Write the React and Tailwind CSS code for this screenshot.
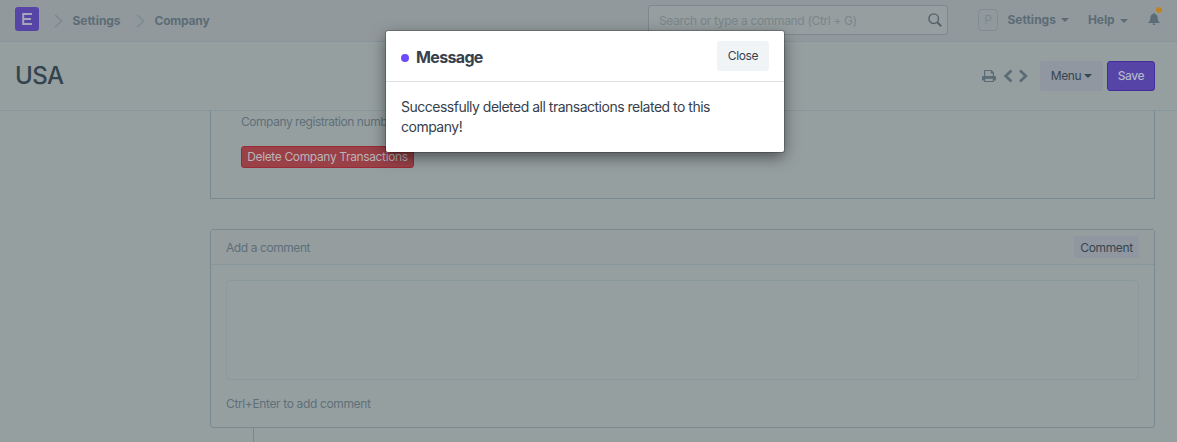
import React from "react";

function Chevron() {
  return (
    <svg width="9" height="14" viewBox="0 0 9 14" fill="none" stroke="#7b8b91" strokeWidth="1.5">
      <path d="M1 .8 7.600 7 1 13.200" />
    </svg>
  );
}

function Caret({ className }) {
  return (
    <svg className={className} width="8" height="4" viewBox="0 0 8 4" fill="currentColor">
      <path d="M0 0h8L4 4z" />
    </svg>
  );
}

function Navbar() {
  return (
    <header className="flex h-[42px] shrink-0 items-start border-b border-[#87969a] bg-[#92999c] text-[12px] font-bold text-[#5b6c76]">
      <div className="ml-[15px] mt-[7px] flex h-6 w-6 items-center justify-center rounded-[3px] bg-[#5645a6]">
        <svg width="10" height="12" viewBox="0 0 10 12" fill="none" stroke="#a5a6bc" strokeWidth="2">
          <path d="M10 1H1.200v10H10M1.200 6H9" />
        </svg>
      </div>
      <nav className="mt-[11px] flex h-[19px] items-center tracking-[-0.05px]">
        <span className="ml-[15px] mr-[9.500px]"><Chevron /></span>
        <span className="w-[49px] whitespace-nowrap">Settings</span>
        <span className="ml-[14px] mr-[10px]"><Chevron /></span>
        <span className="tracking-[-0.2px]">Company</span>
      </nav>
      <div className="ml-auto mt-[5px] flex h-[30px] w-[300px] items-center justify-between rounded-[3px] border border-[#7b8990] bg-[#969e9f] pl-[10px] pr-[5px] font-normal text-[#79868c]">
        <span className="pt-px tracking-[-0.33px]">Search or type a command (Ctrl + G)</span>
        <svg width="14" height="14" viewBox="0 0 14 14" fill="none" stroke="#52636b" strokeWidth="1.4">
          <circle cx="5.7" cy="5.7" r="4.8" />
          <path d="m9.2 9.2 4 4" strokeWidth="2" />
        </svg>
      </div>
      <div className="ml-[30px] mt-[9px] flex h-[22px] w-5 items-center justify-center rounded-[4px] border border-[#808d91] font-normal text-[#7b898f]">P</div>
      <div className="ml-[9.500px] mt-[10px] flex h-[19px] w-[61.500px] items-center justify-between">
        Settings<Caret />
      </div>
      <div className="ml-[19px] mt-[10px] flex h-[19px] w-[40px] items-center justify-between tracking-[-0.1px]">
        Help<Caret className="mt-[2px]" />
      </div>
      <div className="relative ml-[20px] mr-[17px] mt-[13px] h-3 w-3">
        <svg width="12" height="12" viewBox="0 0 12 12" fill="#5b6c76">
          <path d="M6 0c.6 0 .9.4.9.9C8.800 1.400 9.700 3 9.700 5c0 2.500.7 3.400 1.900 4.300v.8H.4v-.8C1.600 8.400 2.300 7.500 2.300 5c0-2 .9-3.600 2.800-4.100C5.100.4 5.400 0 6 0zM4.500 10.500h3a1.500 1.500 0 0 1-3 0z" />
        </svg>
        <span className="absolute -top-[6px] left-[8px] h-[6px] w-[6px] rounded-full bg-[#bb8424]" />
      </div>
    </header>
  );
}

function PageHead() {
  return (
    <div className="flex h-[69px] shrink-0 items-center border-b border-[#87969a] pl-[15px] pr-[22px]">
      <h1 className="text-[24px] font-[450] leading-none tracking-[-0.6px] text-[#33444f]">USA</h1>
      <div className="ml-auto flex items-center text-[12px]">
        <svg width="14" height="14" viewBox="0 0 14 14" fill="#5b6c76" className="mr-[7px]">
          <path fillRule="evenodd" d="M2 2Q2 1 3 1H9.500L12 3.500V7h.5A1.300 1.300 0 0 1 14 8.200V11.500H12V13H2V11.500H0V8.200A1.300 1.300 0 0 1 1.500 7H2zM3.200 2.100V7h7.600V4.400H8.700V2.100zM3.200 9.700v2.200h7.600V9.700z" />
        </svg>
        <svg width="26" height="14" viewBox="0 0 26 14" fill="none" stroke="#5b6c76" strokeWidth="2.8" className="mr-[11px]">
          <path d="M8.500 1.400 2.700 7 8.500 12.600M17 1.400 22.800 7 17 12.600" />
        </svg>
        <button className="mr-1 flex h-[30px] w-[63px] items-center justify-center rounded-[3px] bg-[#9097a0] tracking-[-0.35px] text-[#36464f]">
          Menu<Caret className="ml-[3px]" />
        </button>
        <button className="h-[30px] w-12 rounded-[3px] border border-[#432d9c] bg-[#5645a6] font-[450] tracking-[-0.4px] text-[#b1b6c8]">Save</button>
      </div>
    </div>
  );
}

function Body() {
  return (
    <main className="ml-[210px] mr-[22px] flex flex-col text-[12px] tracking-[-0.36px] text-[#5f6f7a]">
      <section className="flex h-[88px] flex-col items-start border border-t-0 border-[#788a8f] pl-[30px]">
        <p className="mt-[2px] whitespace-nowrap leading-[18px] tracking-[-0.45px]">Company registration numb</p>
        <button className="mt-[15px] h-[22px] w-[173px] whitespace-nowrap rounded-[3px] border border-[#992a38] bg-[#9a4047] text-[#b8b4b8]">
          Delete Company Transactions
        </button>
      </section>
      <section className="mt-[30px] h-[199px] rounded-[3px] border border-[#788a8f]">
        <div className="flex h-[35px] items-center justify-between border-b border-[#87969a] bg-[#959d9f] pl-[15px] pr-[15px]">
          <span className="pt-px tracking-[-0.42px]">Add a comment</span>
          <button className="h-[22px] w-[65px] rounded-[3px] bg-[#9097a0] pt-px text-[#36464f]">Comment</button>
        </div>
        <div className="mx-[15px] mt-[15px] h-[100px] rounded-[4px] border border-[#8a999b]" />
        <p className="ml-[15px] mt-[15px] leading-[18px]">Ctrl+Enter to add comment</p>
      </section>
      <div className="ml-[43px] h-[14px] border-l border-[#788a8f]" />
    </main>
  );
}

function MessageDialog() {
  return (
    <div role="dialog" className="absolute left-[386px] top-[31px] h-[121px] w-[398px] rounded-[2px] bg-white text-[#36414c] shadow-[0_5px_15px_rgba(0,0,0,0.5),0_0_0_1px_rgba(0,0,0,0.2)]">
      <div className="flex h-[51px] items-center border-b border-[#dfe2e5] px-[15px]">
        <span className="mr-[7px] mt-[3px] h-2 w-2 rounded-full bg-[#6e4aff]" />
        <h2 className="mt-[2px] text-[16px] font-bold tracking-[-0.65px]">Message</h2>
        <button className="ml-auto h-[30px] w-[52px] rounded-[3px] bg-[#f0f4f7] text-[12px] tracking-[-0.35px]">Close</button>
      </div>
      <p className="px-[15px] pt-[15px] text-[14px] leading-[20px] tracking-[-0.5px]">
        Successfully deleted all transactions related to this<br />company!
      </p>
    </div>
  );
}

export default function App() {
  return (
    <div className="relative flex h-[442px] w-[1177px] flex-col overflow-hidden bg-[#969fa0] font-['Inter',sans-serif]">
      <Navbar />
      <PageHead />
      <Body />
      <MessageDialog />
    </div>
  );
}
